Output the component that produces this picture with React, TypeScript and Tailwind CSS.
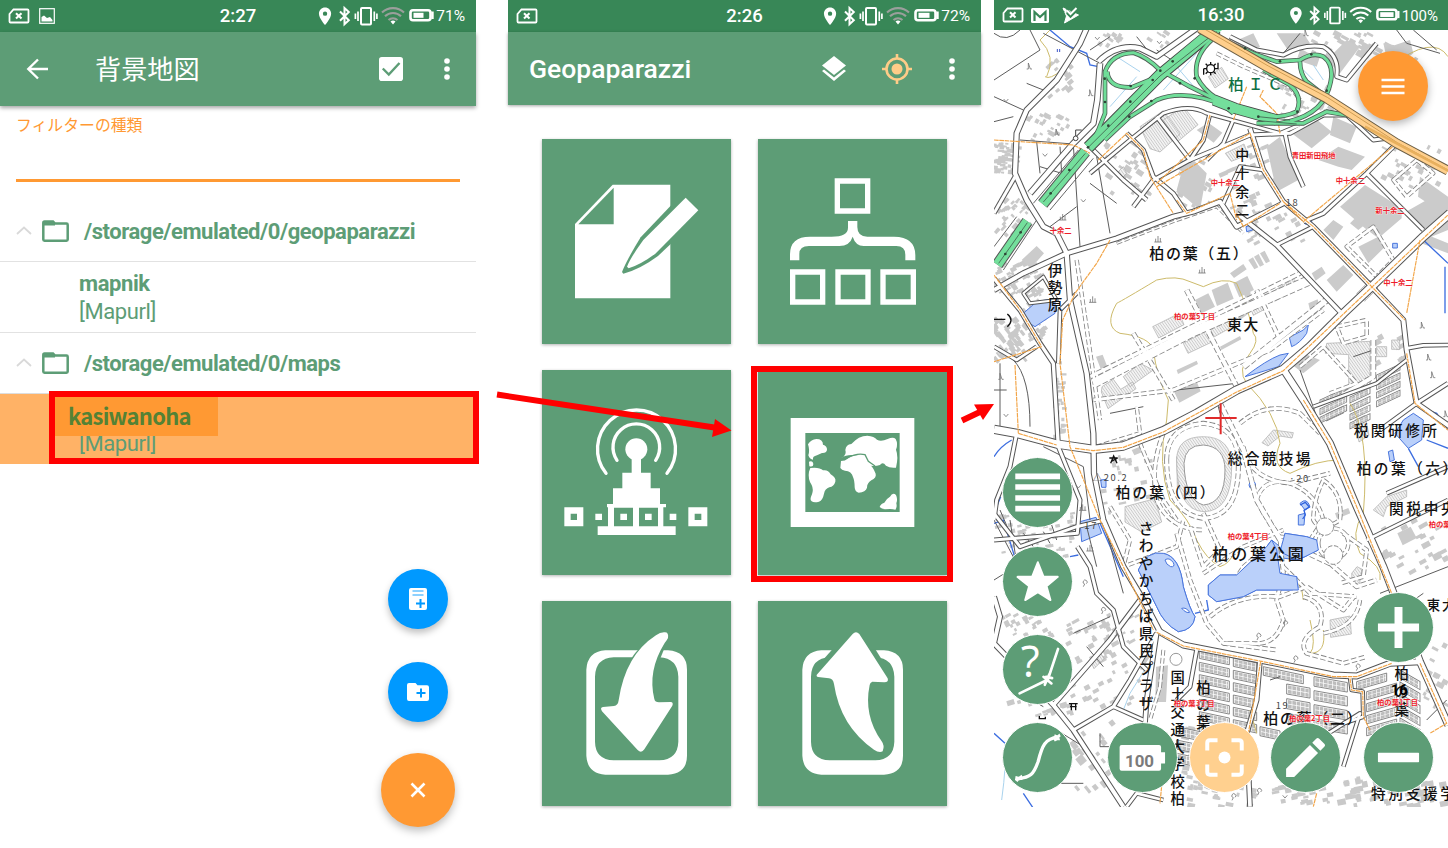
import React from "react";

/* ---------- status bar ---------- */

function StatusIcons({ wifi, level, small }: { wifi: string; level: number; small?: boolean }) {
  return (
    <svg viewBox="0 0 119 32" className={small ? "h-[30.5px] w-[114px]" : "h-8 w-[119px]"} fill="none">
      <path
        transform="translate(-1.4 5.8) scale(.87)"
        fill="#fff"
        d="M12 2C8.13 2 5 5.13 5 9c0 5.25 7 13 7 13s7-7.75 7-13c0-3.87-3.13-7-7-7zm0 9.500a2.500 2.500 0 1 1 0-5 2.500 2.500 0 0 1 0 5z"
      />
      <path d="M24 11.500l8.800 8.800-4.300 4V8l4.300 4-8.800 8.800" stroke="#fff" strokeWidth="2" />
      <rect x="45" y="8" width="10" height="16.500" rx="1" stroke="#fff" strokeWidth="2" />
      <path d="M42 11.500v9.500M58.300 11.500v9.500M39.400 13.500v5.500M60.900 13.500v5.500" stroke="#fff" strokeWidth="1.700" />
      <g stroke={wifi} strokeWidth="2.100">
        <path d="M66 12.500a16 16 0 0 1 22 0" />
        <path d="M69 16.300a11.500 11.500 0 0 1 16 0" />
        <path d="M72.500 20a7 7 0 0 1 9 0" />
      </g>
      <path d="M74.500 21.500a4 4 0 0 1 5 0L77 24.500z" fill="#fff" />
      <rect x="94.500" y="10.300" width="20" height="10" rx="2.500" stroke="#fff" strokeWidth="2.600" />
      <rect x="97.500" y="12.800" width={level} height="5" fill="#fff" />
      <path d="M116.500 11.500v7.500" stroke="#fff" strokeWidth="2.400" />
    </svg>
  );
}

function SimIcon() {
  return (
    <svg viewBox="0 0 22 16" className="h-4 w-[22px]" fill="none" stroke="#fff">
      <path d="M5.500 1.500h14q1 0 1 1v11q0 1-1 1h-17q-1 0-1-1V6z" strokeWidth="1.800" />
      <path d="M8 5.300l5.500 5.200M13.500 5.300L8 10.500" strokeWidth="2.100" />
    </svg>
  );
}

function StatusBar(p: {
  time: string;
  charge: string;
  wifi?: string;
  level: number;
  height: string;
  small?: boolean;
  children?: React.ReactNode;
}) {
  return (
    <div className={"grid shrink-0 grid-cols-[1fr_auto_1fr] items-center bg-[#388757] text-white " + p.height}>
      <div className="flex items-center gap-[9px] pl-2">
        <SimIcon />
        {p.children}
      </div>
      <div className="pt-[2px] text-[18.500px] font-medium">{p.time}</div>
      <div className={"flex items-center justify-end " + (p.small ? "pr-[10px] text-[15px]" : "pr-[11px] text-[15.500px]")}>
        <StatusIcons wifi={p.wifi ?? "#9b9f9c"} level={p.level} small={p.small} />
        <span className="ml-px pt-px whitespace-nowrap">{p.charge}</span>
      </div>
    </div>
  );
}

function Dots() {
  return (
    <svg viewBox="0 0 6 24" className="h-6 w-1.5" fill="#fff">
      <circle cx="3" cy="4" r="2.800" />
      <circle cx="3" cy="12" r="2.800" />
      <circle cx="3" cy="20" r="2.800" />
    </svg>
  );
}

/* ---------- left: source list ---------- */

function FolderRow({ path }: { path: string }) {
  return (
    <div className="flex h-[60px] items-center pl-4">
      <svg viewBox="0 0 16 9" className="-mt-0.5 h-[9px] w-4" fill="none" stroke="#d9d9d9" strokeWidth="1.800">
        <path d="M1 8l7-6.500L15 8" />
      </svg>
      <svg viewBox="0 0 27 22" className="ml-[10px] h-[22px] w-[27px]" fill="none">
        <path d="M1.300 3v16.500q0 1.200 1.200 1.200h22q1.200 0 1.200-1.200V4.800q0-1.200-1.200-1.200H13L11 1.500H2.500q-1.200 0-1.200 1.500z" stroke="#5d9d76" strokeWidth="2.500" />
        <path d="M1.500 1.500H11l2 2.500v1.500H1.500z" fill="#5d9d76" />
      </svg>
      <span className="ml-[15px] text-[22px] font-bold tracking-[-0.450px] whitespace-nowrap">{path}</span>
    </div>
  );
}

function SourcesPanel() {
  return (
    <section className="flex h-[848px] w-[476px] flex-col">
      <StatusBar time="2:27" charge="71%" level={10} height="h-8">
        <svg viewBox="0 0 16 16" className="size-4" fill="none">
          <rect x=".7" y=".7" width="14.600" height="14.600" stroke="#fff" strokeWidth="1.200" />
          <path d="M2.500 13.500V9l2.500-1.500 3 2.500 3-1 2.500 3v1.500z" fill="#fff" />
        </svg>
      </StatusBar>
      <header className="flex h-[74px] shrink-0 items-center bg-[#5d9d76] pr-[26px] pl-[26px] text-white shadow-[0_2px_4px_rgba(0,0,0,0.35)]">
        <svg viewBox="0 0 22 22" className="size-[22px]" fill="none" stroke="#fff" strokeWidth="2.400">
          <path d="M12 1.500L2.300 11l9.700 9.500M2 11h20" />
        </svg>
        <h1 className="ml-[47px] flex-1 pt-[3px] text-[26.200px]">背景地図</h1>
        <svg viewBox="0 0 24 24" className="mr-[41px] size-6">
          <rect width="24" height="24" rx="2.800" fill="#fff" />
          <path d="M3.800 11.500l6 6L20.500 6" fill="none" stroke="#5d9d76" strokeWidth="2.400" />
        </svg>
        <Dots />
      </header>
      <div className="mx-4 flex h-[76px] flex-col border-b-[3px] border-[#ff9933] pt-2">
        <label className="text-[15.850px] text-[#ff9933]">フィルターの種類</label>
      </div>
      <div className="flex flex-col pt-[19px] text-[#5d9d76]">
        <FolderRow path="/storage/emulated/0/geopaparazzi" />
        <div className="flex h-[72px] flex-col border-y-[1.500px] border-[#e2e2e2] pt-2 pl-[79px] text-[22px] leading-7 tracking-[-0.400px]">
          <b>mapnik</b>
          <span>[Mapurl]</span>
        </div>
        <FolderRow path="/storage/emulated/0/maps" />
        <div className="relative h-[71px] border-t border-[#dddddd] bg-[#ffb266] pt-[36px] pl-[79px] text-[22px] leading-7 tracking-[-0.400px]">
          <span>[Mapurl]</span>
          <div className="absolute top-[3px] left-[55px] flex h-[39px] w-[163px] items-center bg-[#ff9933] pb-[3px] pl-[13px] font-['Noto_Sans_CJK_JP',sans-serif] text-[22px] font-bold tracking-[-0.750px] text-[#548235]">
            kasiwanoha
          </div>
        </div>
      </div>
      <div className="flex flex-1 flex-col items-center self-end pt-[105px] pr-[21px]">
        <button className="flex size-[60px] items-center justify-center rounded-full bg-[#0099ff] shadow-[0_4px_7px_rgba(0,0,0,0.25)]">
          <svg viewBox="0 0 18 22" className="h-[22px] w-[18px]">
            <rect width="18" height="22" rx="2" fill="#fff" />
            <path d="M3.500 3h11M3.500 7h11" stroke="#0099ff" strokeWidth=".9" />
            <path d="M11.500 11v9M7 15.500h9" stroke="#0099ff" strokeWidth="2" />
          </svg>
        </button>
        <button className="mt-[33px] flex size-[60px] items-center justify-center rounded-full bg-[#0099ff] shadow-[0_4px_7px_rgba(0,0,0,0.25)]">
          <svg viewBox="0 0 22 18" className="h-[18px] w-[22px]">
            <path d="M2 0h6.500l2 2.300H20q2 0 2 2V16q0 2-2 2H2q-2 0-2-2V2Q0 0 2 0z" fill="#fff" />
            <path d="M14 5.500v9M9.500 10h9" stroke="#0099ff" strokeWidth="2" />
          </svg>
        </button>
        <button className="mt-[31px] flex size-[74px] items-center justify-center rounded-full bg-[#ff9933] shadow-[0_4px_8px_rgba(0,0,0,0.25)]">
          <svg viewBox="0 0 16 16" className="size-4" stroke="#fff" strokeWidth="2.600">
            <path d="M1.500 1.500l13 13M14.500 1.500l-13 13" />
          </svg>
        </button>
      </div>
    </section>
  );
}

/* ---------- middle: dashboard ---------- */

function Tile({ viewBox, children }: { viewBox: string; children: React.ReactNode }) {
  return (
    <button className="h-[205px] bg-[#5d9d76] shadow-[0_1px_3px_rgba(0,0,0,0.3)]">
      <svg viewBox={viewBox} className="h-full w-full" fill="#fff">
        {children}
      </svg>
    </button>
  );
}

const G = "#5d9d76";

function DashboardPanel() {
  return (
    <section className="ml-8 flex h-[848px] w-[473px] flex-col">
      <StatusBar time="2:26" charge="72%" level={11} height="h-8" />
      <header className="flex h-[73px] shrink-0 items-center bg-[#5d9d76] pr-[26px] pl-[21px] text-white shadow-[0_1px_3px_rgba(0,0,0,0.35)]">
        <h1 className="flex-1 pt-px text-[26.500px] font-medium">Geopaparazzi</h1>
        <svg viewBox="0 0 24 26" className="mr-9 h-[26px] w-6" fill="#fff">
          <path d="M12 0l12 9.500L12 19 0 9.500z" />
          <path d="M0 15l2-1.500 10 8 10-8 2 1.500-12 10z" />
        </svg>
        <svg viewBox="0 0 30 30" className="mr-[37px] size-[30px]" fill="none" stroke="#ffcc88" strokeWidth="2.600">
          <circle cx="15" cy="15" r="10.500" />
          <circle cx="15" cy="15" r="5.500" fill="#ffcc88" stroke="none" />
          <path d="M15 0v5M15 25v5M0 15h5M25 15h5" />
        </svg>
        <Dots />
      </header>
      <div className="grid grid-cols-[189.330px_189.330px] gap-x-[26.300px] gap-y-[26px] pt-[34px] pl-[34px]">
        <Tile viewBox="36 27 568 615">
          <path d="M248 164H421V505H135V282z" />
          <path d="M251 173V283H145z" fill={G} />
          <path d="M467 180L530 240 384 378Q330 418 280 431L276 426Q290 390 332 322z" fill={G} />
          <path d="M467 203L505 241 376 371Q335 402 296 415L291 410Q302 382 340 330z" />
        </Tile>
        <Tile viewBox="683 27 568 615">
          <g fill="none" stroke="#fff" strokeWidth="16">
            <path d="M921 153h91v90h-91zM787 426h90v90h-90zM923 426h90v90h-90zM1058 426h91v90h-91z" />
          </g>
          <path d="M953 273h28v18q0 29 30 29h80q64 0 64 56v15h-30v-17q0-26-27-26H1000q-24 0-33-28-9 28-40 28H836q-29 0-29 24v19h-28v-18q0-53 60-53h65q49 0 49-27z" />
        </Tile>
        <Tile viewBox="36 30 568 615">
          <g fill="none" stroke="#fff" strokeWidth="10" strokeLinecap="round">
            <path d="M228 340A117 117 0 1 1 411 340" />
            <path d="M261 301A70 70 0 1 1 377 301" />
          </g>
          <circle cx="319" cy="268" r="33" />
          <path d="M305 295h28v43h29v47h28v47h18v10h-8v57h37v26H203v-26h31v-57h-3v-10h18v-47h28v-47h28z" />
          <path d="M252 443h57v56h-57zM327 443h57v56h-57z" fill={G} />
          <path d="M196 461h20v19h-20zM271 461h20v19h-20zM345 461h20v19h-20zM419 461h20v19h-20z" />
          <path fillRule="evenodd" d="M103 442h57v57h-57zM122 461v19h19v-19zM475 442h57v57h-57zM494 461v19h20v-19z" />
        </Tile>
        <Tile viewBox="683 30 568 615">
          <path fillRule="evenodd" d="M781 174h371v327H781zM825 219v237h283V219z" />
          <path d="M833 253q10-15 25-16 20 0 20 17 13 4 12 16-2 10-15 9l-15 7q-14 3-12 13-9 0-14-13 5-15-1-33zM836 305q12-4 13 8 0 9-12 6zM840 324q28-3 38 7 15-3 23 12 17 10 14 22-4 14-18 17-13 4-16 19-4 20-15 24-15 4-22-1-7-4 1-21 5-15-1-28-12-18-8-40z" />
          <path d="M935 293q15-9 10-23 2-16 18-18 22-25 48-25 21 1 29 12 12 7 32-2 17-8 24 0 8 15 1 32 8 20 0 54-19 2-30-6-10-13-18-2-16 6-39 1-14-8-20-21-5-12-22-10-22-1-34 8z" />
          <path d="M932 303q13 0 20-7 14-14 52-9 9 7 12 25 12 8 20 29 3 12-13 20-13 8-13 22-4 13-25 15-11-1-12-16 0-20-5-31-4-18-24-19-10-2-14-8zM1048 441q2-9 14-13 7-13 17-18 8-14 18-5 6 14 1 25 3 12-3 19-11-3-30-1-12-1-17-7z" />
          <path d="M950 294q30-16 54-10l10 20 20 14" fill="none" stroke={G} strokeWidth="4" />
        </Tile>
        <Tile viewBox="36 18 568 615">
          <path fillRule="evenodd" d="M226 166H414Q471 170 471 224V482Q471 536 414 539H226Q172 536 169 482V224Q172 170 226 166zM251 187Q196 190 195 245V440Q196 494 251 496H388Q443 494 445 440V245Q443 190 388 187z" />
          <path d="M324 164Q308 182 303 193L390 193 402 163z" fill={G} />
          <path d="M402 112Q417 110 414 129 412 134 404 144 352 228 373 312 375 322 387 322L422 321Q431 322 427 332L343 463Q334 476 323 465L216 349Q209 337 219 336L252 333Q264 332 266 316 286 180 378 121 390 112 402 112z" />
        </Tile>
        <Tile viewBox="683 18 568 615">
          <path fillRule="evenodd" d="M873 166H1061Q1118 170 1118 224V482Q1118 536 1061 539H873Q819 536 816 482V224Q819 170 873 166zM898 187Q843 190 842 245V440Q843 494 898 496H1035Q1090 494 1092 440V245Q1090 190 1035 187z" />
          <path d="M905 164L881 191 900 205 1040 205 1053 191 1036 164z" fill={G} />
          <path d="M862 236L967 117Q977 106 987 117L1072 250Q1076 262 1062 262L1026 260Q1019 262 1018 270 999 362 1054 439 1064 452 1057 469 1046 474 1031 464 930 394 911 267 908 251 896 250L863 246Q855 243 862 236z" />
        </Tile>
      </div>
    </section>
  );
}

/* ---------- right: map ---------- */

function rng(seed: number) {
  let s = seed;
  return () => {
    s = (s * 16807) % 2147483647;
    return s / 2147483647;
  };
}

/* small rotated houses inside a box: seed, x, y, w, h, count, angle, size */
const houseFields: number[][] = [
  [11, 14, 430, 76, 90, 60, 0.1, 13],
  [12, 105, 330, 130, 90, 24, 0.5, 14],
  [13, 150, 180, 100, 110, 22, -0.7, 15],
  [14, 330, 95, 230, 50, 18, 0.6, 14],
  [15, 20, 600, 100, 110, 40, -0.8, 13],
  [16, 14, 790, 146, 100, 60, -0.5, 14],
  [17, 14, 960, 96, 120, 70, 0.9, 15],
  [18, 100, 860, 80, 160, 36, 0.9, 14],
  [19, 195, 1080, 30, 260, 36, 0, 13],
  [20, 20, 1540, 230, 130, 60, -0.2, 13],
  [21, 20, 1830, 180, 120, 34, -0.5, 14],
  [22, 230, 1840, 220, 280, 60, -0.5, 16],
  [23, 60, 2100, 200, 50, 16, -0.3, 16],
  [24, 250, 2150, 120, 220, 20, 0.9, 18],
  [25, 900, 100, 300, 70, 36, 0.5, 17],
  [26, 350, 430, 130, 150, 30, 0.6, 17],
  [27, 560, 480, 110, 140, 24, 0.5, 15],
  [28, 700, 410, 170, 230, 28, -0.4, 18],
  [29, 780, 630, 160, 110, 24, -0.5, 15],
  [30, 1100, 1000, 140, 90, 10, -0.5, 18],
  [31, 340, 1370, 150, 170, 24, -0.2, 15],
  [32, 1180, 1560, 190, 160, 24, -0.5, 20],
  [33, 1300, 1930, 74, 200, 18, 0.5, 16],
  [34, 580, 2180, 220, 240, 80, 0.2, 16],
  [35, 1050, 2330, 320, 90, 50, -0.2, 20],
  [36, 830, 2340, 200, 70, 20, -0.2, 16],
  [37, 870, 250, 160, 100, 30, 0.5, 14],
  [38, 1180, 440, 190, 120, 26, 0.5, 15],
  [39, 1190, 150, 90, 80, 20, 0.5, 18],
];

function houses(f: number[]) {
  const [seed, x, y, w, h, n, a, size] = f;
  const r = rng(seed * 7919);
  let d = "";
  for (let i = 0; i < n; i++) {
    const cx = x + r() * w;
    const cy = y + r() * h;
    const hw = (size * (0.5 + r())) / 2;
    const hh = (size * (0.4 + r() * 0.6)) / 2;
    const c = Math.cos(a);
    const s = Math.sin(a);
    const pts = [[-hw, -hh], [hw, -hh], [hw, hh], [-hw, hh]].map(
      ([px, py]) => `${(cx + px * c - py * s).toFixed(1)} ${(cy + px * s + py * c).toFixed(1)}`,
    );
    d += "M" + pts.join("L") + "z";
  }
  return d;
}

const housePath = houseFields.map(houses).join("");

const buildings =
  "M560 570l30-110 60 60-20 110zM620 390l35-22 42 30-26 30zM830 440l40-30 55 130-65 35zM905 400l70-45 50 40-60 50zM985 480l60-40 80 30-40 40-40-10zM1030 350l70 30-20 50-60-25zM720 130l70-30 20 40-60 30zM860 100l80 0 20 30-60 30zM1010 180l60-60 40 20-60 80zM1050 620l75-65 110 70 0 30-70 60-40-30zM1240 640l70-40 64 50v40l-50 20zM1290 530l84 60v60l-90-60zM1300 700l74 30v30l-80-30zM95 780l45-42 22 22-40 45zM735 940l45-20-20-40 20-10 10 60-40 30zM720 820l40-28 10 16-38 26zM615 900l40-20 20 40-40 20zM665 870l48-22 18 48-50 22zM730 850l42-22 20 42-44 22zM775 780l14-8 16 30-12 6zM792 770l14-8 16 32-12 6zM810 760l14-8 16 32-12 6zM550 1170l68-30 14 34-64 34zM560 1110l60-28 4 10-60 30zM690 1040l60-32 4 10-60 32zM1010 840l50-45 30 30-50 50zM965 820l30-20 12 20-30 22zM1000 690l30-30 30 20-30 40zM1080 670l30-30 20 30-25 20zM1105 740l60-30 20 30-50 50zM955 910l28-12 6 26-28 12zM318 1070l20-6 14 36-20 6zM425 1350l30-12 8 16-30 12zM1222 1600l40-20 18 34-42 22zM1035 1540l40-16 6 16-40 16zM498 2000l36-4-6 110-32 0zM440 2000l26-40 14 10-26 40zM1180 130l60 10 20 40-60 40zM930 150l60 20-10 30-60-20zM1200 140l60-20 10 40-50 40zM900 1090l40-30 50 20-50 40z";

const hatched =
  "M450 380l70-48 50 70-60 54-30-10zM520 360l60-40 44 54-60 50zM655 230l40-28 20 34-40 28zM706 460l56-28 12 32-50 20zM488 980l80-40 14 34-76 40zM580 1030l74-40 16 34-76 36zM660 980l70-36 12 28-72 40zM776 910l34-12 14 30-34 18zM840 880l70-44 20 24-76 44zM336 1160l34-22 22 30 36-22 10 20-84 60-20-50zM400 1130l50-40 40 20-70 50zM1010 1030l130-6 0 120-64 20 0-100-70-4zM1160 1040l30 0v30h-30zM1205 1020l24 0v28h-24zM560 1370l28-20 4 140-30-30zM405 1520l90-24 20 70-60 30-50-30zM1020 1860l60-12 4 54-62 10zM850 1290l60 8-4 16-36-6-36 30-18-10zM1150 1530l40-40 60-20 0 20-60 30-10 30zM1095 1260l30-14 12 60-30 20zM300 1980l30-24 12 20-30 30zM1100 880l40-40 24 24-40 40zM380 520l20-20 10 20-20 20zM1085 1720l16-20 16 8-10 50-20-8z";

/* [path, width] */
const roads: [string, number][] = [
  ["M290 85L270 130 200 240 110 330 80 400 75 520 110 600 160 680 200 700 230 760 240 900 290 1120 310 1300 312 1420 340 1560 400 1700 460 1800 510 1895", 13],
  ["M75 530L12 640", 9],
  ["M12 1288L80 1300 200 1332 310 1348 400 1338 520 1292 620 1240 740 1170 880 1108 960 1040 1060 940 1145 860 1300 710 1380 640", 22],
  ["M1145 860L970 680 880 605 820 510 780 385", 11],
  ["M740 640L860 735 1050 935", 11],
  ["M860 735L970 680", 8],
  ["M880 1108L940 1200 1020 1330 1100 1520 1180 1700 1290 1985 1375 2175", 18],
  ["M1145 860L1240 960 1250 1050 1280 1210 1380 1280", 12],
  ["M1250 1045L1300 1036 1375 1035", 8],
  ["M12 870L100 820 230 760 380 715 550 650 610 635 690 605 740 680 880 610", 12],
  ["M12 835L90 930 150 1030 190 1090 205 1340", 10],
  ["M205 1090L210 930 260 880", 8],
  ["M80 1300L60 1400 20 1500 12 1560", 9],
  ["M205 1340L270 1500 262 1600 12 1620", 9],
  ["M12 1540L90 1640 260 1580 345 1560", 9],
  ["M262 1640L300 1700 320 1780 370 1830 400 1940 470 2010", 9],
  ["M12 1790L30 1850 12 1930 190 2115 250 2190 400 2420", 12],
  ["M190 2115L360 1920 450 1800", 11],
  ["M250 2190L370 2120 420 2040 500 1900", 9],
  ["M370 2120L460 2160", 8],
  ["M500 1890L580 1935 810 1980 1030 2025 1100 2028 1200 1990 1290 1985", 15],
  ["M500 1900L470 2100 460 2240", 11],
  ["M810 1980L800 2100 770 2200 780 2420", 11],
  ["M1080 2030L1085 2070 1118 2075 1120 2150 1060 2170", 8],
  ["M620 1950L600 2060 560 2100", 9],
  ["M300 440L400 540 470 600", 9],
  ["M410 400L460 450 490 530 550 580 590 640", 9],
  ["M490 540L600 480 780 405 900 400 1000 345 1070 345 1150 420 1190 415", 9],
  ["M660 340L640 420 600 480 500 350", 9],
  ["M730 360L700 430 650 480", 8],
  ["M885 400L900 470 940 560", 9],
  ["M1220 430L1130 520 1000 640 940 665", 9],
  ["M1130 520L1300 690", 9],
  ["M1190 1480L1374 1400", 8],
  ["M1130 1620L1374 1500", 8],
  ["M700 610L750 500 820 510", 8],
  ["M430 620L490 540", 9],
  ["M1374 1150L1280 1210 1170 1290", 9],
  ["M970 1220L1160 1150 1250 1080", 7],
  ["M920 2260L1110 2140 1060 2300", 8],
  ["M410 2420L440 2380 520 2400", 8],
  ["M12 1040L80 1080 140 1040", 8],
  ["M100 880L160 830 200 900 120 910z", 6],
  ["M330 190L322 300 310 370 250 430 120 580", 14],
  ["M325 185Q380 130 450 145L500 170 620 85", 13],
  ["M300 520L420 420 520 340Q600 310 650 340L760 370 870 400 1000 345", 8],
  ["M720 110L800 150 880 165Q940 130 1000 140Q1050 170 1040 230L1070 240 1160 130", 9],
];

/* paths drawn with dashed edges */
const dashedRoads: [string, number][] = [
  ["M300 1130L930 820", 10],
  ["M310 1150L600 1000 960 840", 26],
  ["M310 1200L550 1170 840 1050 1000 930", 9],
  ["M430 1000L550 1200", 10],
  ["M590 870L740 1160", 12],
  ["M800 870L870 1020", 10],
  ["M760 1100L860 1020 1010 900", 16],
  ["M260 780L330 1260", 8],
  ["M320 1340L450 1300 440 1220", 8],
  ["M530 1380Q530 1280 640 1270Q750 1280 745 1400Q745 1550 640 1555Q530 1540 530 1380z", 10],
  ["M520 1300Q480 1400 500 1500Q540 1590 640 1590", 9],
  ["M690 1210L760 1350 800 1500 870 1620 1020 1690", 12],
  ["M750 1270Q830 1200 930 1240L990 1300", 9],
  ["M760 1340Q780 1440 900 1450L1020 1420", 9],
  ["M800 1500Q820 1430 900 1450Q980 1480 1000 1560L960 1620 870 1610 820 1540z", 8],
  ["M1000 1440Q1060 1480 1050 1560Q990 1600 970 1560Q970 1500 1000 1440z", 8],
  ["M1030 1630m-45 0a45 45 0 1 0 90 0a45 45 0 1 0-90 0", 8],
  ["M640 1540L690 1650 640 1700 600 1580", 9],
  ["M560 1600L600 1740 650 1870 700 1930 860 1950", 9],
  ["M640 1720L760 1640 880 1590", 8],
  ["M660 1850Q740 1780 870 1790L950 1760 1060 1830 1100 1780", 9],
  ["M870 1620L880 1720 860 1800 880 1860Q860 1940 780 1930L700 1930", 9],
  ["M940 1790Q1010 1810 990 1880Q920 1920 950 1960L1060 1990 1130 1970", 9],
  ["M1020 1690L1100 1760 1160 1740", 10],
  ["M1060 1600L1130 1650 1120 1730 1050 1750", 9],
  ["M880 1700L960 1780 1100 1790", 8],
  ["M360 1520L420 1620 400 1700 560 1640 580 1560", 8],
  ["M450 1330L520 1500 560 1560", 8],
  ["M1040 980L1130 960 1130 1010 1060 1030z", 8],
  ["M930 1100L1000 1040 1100 1150 1020 1180", 8],
  ["M1150 1020V1130L1050 1190", 12],
  ["M1070 740L1160 830 1210 780 1150 680z", 8],
  ["M1210 540L1280 480 1330 520 1250 590z", 8],
  ["M720 1760L760 1700 830 1640", 7],
  ["M1000 1900Q1100 1880 1110 1800", 8],
  ["M680 160L760 200 900 260 930 300", 7],
  ["M520 1950L510 2060 480 2160", 7],
  ["M380 730L550 665 680 620 760 700", 4],
];

const hairlines =
  "M12 240L150 150 120 90M12 100Q50 130 90 90M100 330L12 290M12 365L70 350M90 420L250 432M140 425L150 520M210 440L215 520 150 500M160 100L330 190M110 250L160 270 190 250M250 435L270 740M320 470L360 700M180 680L260 620M300 550L380 610M30 1090V1300M70 1080Q120 1130 120 1280M12 1170H50M160 1340L280 1400 300 1560M345 1580L400 1780M290 1580L320 1700M560 1170L740 1150M930 1110L980 1250M680 1200L690 1240M1090 1070L1150 1050M1340 150L1270 90M1220 90L1250 130 1350 160M880 160L930 100M440 110L480 160M1310 2160L1370 2100M12 1560L80 1690 60 1560M100 1600L130 1640M160 1595L180 1630M30 1530L60 1600M200 1620L180 1560M1170 1780L1374 1700M1200 1850L1300 1780M1140 1890L1200 1900M90 2080L160 2120M290 1940L340 2000M250 1900L360 1850M330 2200V2240H380M210 2350H280M280 2240L200 2190M840 2040L870 2030M500 150L560 190M300 150L360 110M12 1740L60 1710M360 1240L460 1220";

const orangeDashes =
  "M12 420L250 435 300 460M325 480L410 400 460 450 480 530 550 640M12 825L90 930 155 1040M155 1040L12 1085M75 1095L85 1300M85 1300L200 1335M360 720L320 790 255 880 218 960 210 1090 240 1340 330 1560 400 1700 490 1890M255 1345L310 1352 400 1342 520 1296 740 1176 880 1112 1145 862 1374 645M940 1200L1020 1330 1100 1520 1205 1780M660 345L640 420 500 550M500 560L780 400 820 510 880 605 970 680 1145 860 1245 960M1250 1060L1275 1210 1374 1290M740 640L760 680 870 610M500 1897L580 1938 810 1983 1030 2030 1100 2030 1205 1990M812 1985L775 2200M1080 2035L1085 2070 1118 2075 1120 2150 1140 2190M530 2200L510 2410M1220 430L940 665 880 605M770 260L730 360M870 400L860 340 810 290 820 270M1290 1990L1370 2170 1320 2200M1290 720L1250 940M980 2380L970 2420M560 600L590 640 720 580 740 660";

const contours =
  "M170 230Q200 170 150 120L180 90M165 230Q180 240 215 210M500 840Q560 825 600 845L640 860Q700 830 740 850Q780 940 790 1000Q810 1020 780 1060Q740 1110 770 1150Q860 1240 870 1330Q840 1400 900 1420Q980 1380 1050 1380M500 840Q400 900 380 910Q340 980 390 1000Q480 1010 490 1050Q500 1130 535 1200L530 1260Q500 1390 540 1500Q600 1560 620 1620Q650 1680 690 1700Q720 1690 730 1660M1080 1210Q1140 1300 1120 1540Q1080 1600 1110 1660Q1180 1700 1170 1740M960 1860Q980 1940 960 1960Q1010 1960 1000 1890M870 1700Q940 1740 940 1800M1200 200Q1330 100 1374 170M780 2130L800 2200";

const ponds =
  "M100 940L140 905 195 895 195 940 135 980 110 965zM765 1130Q830 1080 870 1065L895 1060 865 1100 800 1120zM898 1012L940 990 955 975 950 1000Q930 1030 905 1040zM270 1565L318 1552 335 1600 275 1625zM445 1710Q470 1650 520 1660Q570 1670 580 1760Q600 1830 615 1850Q610 1890 565 1895Q520 1870 500 1820L470 1760zM655 1755L690 1725 740 1725 830 1640 845 1620 870 1640 885 1600 950 1610 980 1620 985 1650 945 1670 920 1680 850 1670 870 1720 920 1730 925 1770 870 1770 800 1770 760 1790 680 1805 655 1785zM1215 1300L1240 1260 1270 1240 1300 1260 1295 1320 1255 1345zM1195 1355L1208 1350 1213 1380 1200 1385zM945 660L965 650 965 675 945 672zM768 680L785 675 788 690 770 695zM777 1455a10 10 0 1 0 20 0a10 10 0 1 0-20 0M925 1545L945 1540 942 1575 925 1575zM332 1440L348 1438 348 1462 335 1462zM930 1510Q950 1490 960 1520L945 1530zM1208 730h14v14h-14z";

const streams =
  "M180 90L240 140 290 160 300 195 325 200M12 1370Q30 1340 65 1320M12 1540L32 1490M12 1570L40 1560 80 1690M330 1570L400 1730M1280 1200L1310 1230 1340 1240 1374 1290M1255 1345L1285 1400M1310 1320L1374 1345M1300 720L1374 790M1365 800V940M615 1840L655 1830 650 1800M12 2200L45 2230M100 2380L130 2425M240 1670L265 1665";

const loops =
  "M300 440L325 390 345 340 345 215Q365 160 430 158Q470 170 510 210L600 260 680 300 730 340M352 215Q355 265 425 262L490 235 520 210M345 420L420 350 500 300Q560 275 640 295L690 310M665 120Q610 170 620 230Q640 270 680 295M720 130L790 160 860 185 930 180Q970 155 1000 170Q1040 200 1015 270Q990 350 870 370L800 370M930 185Q930 220 950 245L995 280M820 210L900 255Q940 290 920 335Q880 355 810 350M860 370L940 370 1010 335 1085 348";

/* terraced housing blocks: x, y, width, rows, pitch, skew */
const terraces: number[][] = [
  [628, 1950, 90, 7, 37, 12],
  [730, 1974, 70, 6, 37, 12],
  [820, 2000, 120, 1, 38, 12],
  [890, 2052, 70, 3, 44, 10],
  [972, 2030, 100, 4, 42, 10],
  [1010, 1242, 50, 1, 30, -25],
  [1100, 2045, 90, 1, 36, -16],
  [1130, 2075, 90, 4, 36, -16],
  [1230, 2010, 60, 5, 36, 30],
  [560, 2180, 80, 3, 40, 12],
  [660, 2200, 90, 2, 40, 12],
  [990, 1200, 80, 3, 26, -25],
  [1080, 1165, 60, 5, 26, -25],
  [1160, 1125, 70, 4, 26, -25],
  [810, 2180, 60, 1, 40, 12],
];

type Label = [string, number, number, number, number];

const labels: Label[] = [
  ["柏の葉（五）", 478, 760, 50, 45],
  ["東大", 711, 973, 49, 45],
  ["総合競技場", 713, 1377, 51, 44],
  ["柏の葉（四）", 377, 1477, 50.5, 44],
  ["柏の葉公園", 667, 1663, 56.5, 48],
  ["税関研修所", 1091, 1291, 51.5, 44],
  ["柏の葉（六）", 1100, 1407, 51.5, 44],
  ["関税中央", 1197, 1526, 52, 44],
  ["東大", 1310, 1815, 46, 40],
  ["特別支援学", 1143, 2382, 52, 44],
  ["柏の葉（二）", 820, 2155, 50, 45],
];

const vertical: Label[] = [
  ["中十余二", 757, 465, 54.500, 42],
  ["伊勢原", 195, 813, 51, 44],
  ["さわやかちば県民プラザ", 468, 1585, 52.500, 44],
  ["国土交通大学校柏", 563, 2032, 52, 43],
  ["柏の葉", 640, 2062, 52.500, 43],
  ["柏の葉", 1235, 2022, 54, 43],
];

const redLabels: [string, number, number][] = [
  ["青田新田飛地", 905, 465],
  ["中十余二", 662, 547],
  ["中十余二", 1037, 542],
  ["新十余二", 1156, 631],
  ["十余二", 179, 692],
  ["中十余二", 1180, 846],
  ["柏の葉5丁目", 552, 950],
  ["柏の葉4丁目", 713, 1608],
  ["柏の葉3丁目", 551, 2110],
  ["柏の葉2丁目", 897, 2156],
  ["柏の葉1丁目", 1161, 2108],
  ["柏の葉1", 1316, 1574],
];

const spots: [string, number, number][] = [
  ["18", 887, 608],
  ["△20.2", 308, 1434],
  ["·20", 898, 1435],
  ["17", 283, 1577],
  ["19", 857, 2118],
];

const trees = [[118, 197], [302, 277], [201, 395], [948, 97], [1297, 974], [1316, 1070], [1328, 1123], [33, 1128], [382, 1898], [1368, 1240]];
const grass = [[218, 652], [504, 718], [636, 811], [308, 899], [278, 1523], [300, 1645]];
const fieldsMarks = [[322, 115], [508, 127], [48, 301], [165, 465], [280, 602], [168, 85], [48, 1246], [265, 1460], [885, 2390]];
const leafRings = [[286, 1750], [341, 1832], [887, 1872], [807, 1910], [918, 1978], [1105, 2002], [732, 2391], [809, 2375]];

function MapCanvas() {
  return (
    <svg viewBox="12 90 1362 2331" className="block h-[777px] w-[454px]" preserveAspectRatio="none">
      <defs>
        <pattern id="hatch" width="7" height="7" patternUnits="userSpaceOnUse" patternTransform="rotate(-35)">
          <rect width="7" height="7" fill="#f3f3f3" />
          <path d="M0 0V7" stroke="#b4b4b4" strokeWidth="3" />
        </pattern>
      </defs>
      <rect x="12" y="90" width="1362" height="2331" fill="#fff" />
      <path d={housePath} fill="#c9c9c9" />
      <path d={buildings} fill="#cbcbcb" />
      <path d={hatched} fill="url(#hatch)" stroke="#aaa" strokeWidth="2" />
      {terraces.map(([x, y, w, n, pitch, k], i) => (
        <g key={i} transform={`translate(${x} ${y}) skewY(${k})`}>
          {Array.from({ length: n }, (_, j) => (
            <g key={j}>
              <rect y={j * pitch} width={w} height={pitch * 0.68} fill="#fff" stroke="#777" strokeWidth="2.500" />
              <path
                d={`M4 ${j * pitch + pitch * 0.2}H${w - 4}M4 ${j * pitch + pitch * 0.5}H${w - 4}`}
                stroke="#bdbdbd"
                strokeWidth={pitch * 0.25}
                strokeDasharray="11 2"
              />
            </g>
          ))}
        </g>
      ))}
      <path d={contours} fill="none" stroke="#cdbb6b" strokeWidth="3" />
      <path d={ponds} fill="#bad0fa" stroke="#4a76dd" strokeWidth="3" />
      <path d={streams} fill="none" stroke="#3d6ee0" strokeWidth="4" />
      <path d="M470 2000L420 2080 400 2130M45 2230Q50 2290 35 2400M360 320L440 230M520 270L620 160M940 210L970 240M970 195L1000 240M560 200L620 270M380 170L450 215" fill="none" stroke="#a9d3ee" strokeWidth="3" />
      <path d={hairlines} fill="none" stroke="#5c5c5c" strokeWidth="3" />

      <g fill="none" strokeLinejoin="round">
        {dashedRoads.map(([d, w], i) => (
          <path key={i} d={d} stroke="#858585" strokeWidth={w + 5} strokeDasharray="17 7" />
        ))}
        {dashedRoads.map(([d, w], i) => (
          <path key={i} d={d} stroke="#fff" strokeWidth={w} />
        ))}
        {roads.map(([d, w], i) => (
          <path key={i} d={d} stroke="#555" strokeWidth={w + 6} />
        ))}
        {roads.map(([d, w], i) => (
          <path key={i} d={d} stroke="#fff" strokeWidth={w} />
        ))}
      </g>
      <path d={orangeDashes} fill="none" stroke="#f2a548" strokeWidth="3.500" strokeDasharray="14 2" />

      {/* lakes inside the park stay above the footpaths */}
      <path
        d="M655 1755L690 1725 740 1725 830 1640 845 1620 860 1650 870 1720 920 1730 925 1770 870 1770 800 1770 760 1790 680 1805 655 1785zM445 1710Q470 1650 520 1660Q570 1670 580 1760Q600 1830 615 1850Q610 1890 565 1895Q520 1870 500 1820L470 1760zM885 1600L950 1610 980 1620 985 1650 945 1670 920 1680 870 1655z"
        fill="#bad0fa"
        stroke="#4a76dd"
        strokeWidth="3"
      />
      <path d="M560 1380Q560 1310 640 1310Q725 1310 725 1400Q725 1535 640 1535Q560 1530 560 1380z" fill="url(#hatch)" stroke="#aaa" strokeWidth="2" />
      <path d="M582 1390Q585 1335 640 1335Q705 1340 705 1410Q705 1510 640 1515Q585 1500 582 1390z" fill="#fff" stroke="#999" strokeWidth="3" />
      <circle cx="1005" cy="1580" r="26" fill="#fff" stroke="#999" strokeWidth="3" strokeDasharray="18 4" />
      <circle cx="1030" cy="1665" r="28" fill="#fff" stroke="#888" strokeWidth="3" strokeDasharray="14 5" />
      <circle cx="558" cy="1978" r="18" fill="#fff" stroke="#999" strokeWidth="3" />
      <path d="M525 1680q12-10 25 8 6 14-8 12-14-6-17-20zM575 1825q14-4 24 12-10 4-24-12z" fill="#fff" stroke="#4a76dd" strokeWidth="3" />
      <path d="M930 1515l16-8 12 14-16 10 4 14-8 12" fill="none" stroke="#2f62dc" strokeWidth="4" />

      {/* expressway and ramps */}
      <g fill="none" strokeLinejoin="round">
        <path d={loops} stroke="#4f5f55" strokeWidth="14" />
        <path d="M680 85L510 225 295 442" stroke="#444" strokeWidth="37" />
        <path d="M672 300L735 325 860 360" stroke="#444" strokeWidth="34" />
        <path d={loops} stroke="#6fdd98" strokeWidth="9" />
        <path d="M690 75L510 225 295 442" stroke="#74df9c" strokeWidth="31" />
        <path d="M672 300L735 325 860 360" stroke="#74df9c" strokeWidth="29" />
        <path d="M286 455L158 612M112 664L22 794" stroke="#555" strokeWidth="35" />
        <path d="M286 455L158 612M112 664L22 794" stroke="#74df9c" strokeWidth="29" />
        <path d="M680 95L510 228 295 442M286 460L160 606M112 668L26 790M805 350L900 360M805 362L920 372" stroke="#40614d" strokeWidth="2.500" />
        <path d="M265 450L130 610M310 475L180 630M140 660L40 810M80 650L12 740" stroke="#666" strokeWidth="3" />
        <path d="M630 85L830 200 1010 295 1220 430 1374 512" stroke="#6d5f45" strokeWidth="30" />
        <path d="M630 85L830 200 1010 295 1220 430 1374 512" stroke="#ffcf8c" strokeWidth="24" />
        <path d="M640 85L835 198 1012 292 1222 428 1374 510" stroke="#c79347" strokeWidth="2.500" />
        <path d="M1125 380L1374 512" stroke="#e8b05e" strokeWidth="8" />
      </g>
      <g fill="#2c4435">
        {[[548, 184], [511, 212], [488, 240], [421, 305], [355, 377], [294, 442], [238, 510], [182, 580], [344, 236], [345, 306], [716, 325], [805, 350], [870, 184], [964, 163], [1010, 272], [765, 145], [484, 303], [418, 350], [92, 697], [46, 762], [422, 258], [570, 250], [614, 235], [922, 335]].map(([x, y]) => (
          <circle key={`${x}-${y}`} cx={x} cy={y} r="4" />
        ))}
      </g>

      {/* map symbols */}
      <g fill="none" stroke="#777" strokeWidth="2.500">
        {trees.map(([x, y]) => (
          <path key={`${x}-${y}`} d={`M${x - 8} ${y + 10}h5V${y - 8}l6 18h5`} />
        ))}
        {grass.map(([x, y]) => (
          <path key={`${x}-${y}`} d={`M${x - 11} ${y + 8}h22M${x - 7} ${y + 8}v-10M${x} ${y + 8}v-18M${x + 7} ${y + 8}v-12`} />
        ))}
        {fieldsMarks.map(([x, y]) => (
          <path key={`${x}-${y}`} d={`M${x - 7} ${y - 4}l7 8 7-8`} />
        ))}
        {leafRings.map(([x, y]) => (
          <path key={`${x}-${y}`} d={`M${x - 6} ${y + 10}l4-8a6 6 0 1 1 5-1`} />
        ))}
      </g>
      <g fill="none" stroke="#111" strokeWidth="4">
        <circle cx="662" cy="206" r="12" />
        <path d="M662 194v-8M662 218v8M650 206h-9M674 206h10V188M641 206v18M653 197l-6-6M671 197l6-6M653 215l-6 6M671 215l6 6" />
        <path d="M362 1390l9-22 10 22M358 1374h25l-19 10M237 2111h26M240 2120h20M244 2111v20M257 2111v20M148 2148v8h18v-6M12 958H46M52 942q22 18 0 38" />
      </g>
      <circle cx="257" cy="415" r="7" fill="#fff" stroke="#444" strokeWidth="3" />
      <path d="M257 408v-18h18" stroke="#444" strokeWidth="3" fill="none" />
      <path d="M202 147v9M209 147v9" stroke="#3c55c8" strokeWidth="3" />

      {/* place names */}
      <g fontFamily="'Noto Sans CJK JP', sans-serif">
        <text x="715 774 832" y="269" fontSize="46" fontWeight="500" fill="#0f7044">柏ＩＣ</text>
        {labels.map(([t, x, y, pitch, size]) => (
          <text key={t + x} x={Array.from(t, (_, i) => x + i * pitch).join(" ")} y={y + size * 0.37} fontSize={size} fontWeight="500" fill="#111">
            {t}
          </text>
        ))}
        {vertical.map(([t, x, y, pitch, size]) => (
          <g key={t + x} fontSize={size} fill="#111" fontWeight="500" textAnchor="middle">
            {Array.from(t, (c, i) => (
              <text key={i} x={x} y={y + i * pitch + size * 0.37}>
                {c}
              </text>
            ))}
          </g>
        ))}
        {redLabels.map(([t, x, y]) => (
          <text key={t + x + y} x={x} y={y + 8} fontSize="22" fontWeight="700" fill="#ee1c2a" stroke="#fff" strokeWidth="2" paintOrder="stroke">
            {t}
          </text>
        ))}
        {spots.map(([t, x, y]) => (
          <text key={t + x} x={x} y={y + 10} fontSize="28" fill="#444" letterSpacing="5">
            {t}
          </text>
        ))}
      </g>
      <text x="1228" y="2086" fontSize="43" fontWeight="700" textAnchor="middle" fontFamily="Roboto, sans-serif">
        16
      </text>
      <path d="M692 1210V1303M646 1254H740" stroke="#e02a2a" strokeWidth="6" />
    </svg>
  );
}

function RoundButton({ at, tint, children }: { at: string; tint?: string; children: React.ReactNode }) {
  return (
    <button
      className={
        "absolute size-[71px] overflow-hidden rounded-full border border-white " + (tint ?? "bg-[#5d9d76]") + " " + at
      }
    >
      <svg viewBox="-104 -104 208 208" className="h-full w-full" fill="#fff">
        {children}
      </svg>
    </button>
  );
}

function MapPanel() {
  return (
    <section className="ml-[13px] flex h-[848px] w-[454px] flex-col">
      <StatusBar time="16:30" charge="100%" wifi="#fff" level={14} height="h-[30px]" small>
        <svg viewBox="0 0 18 15" className="-ml-0.5 h-[15px] w-[18px]" fill="none">
          <rect width="18" height="15" rx="1.500" fill="#fff" />
          <path d="M3.500 13V4L9 9l5.500-5v9" stroke="#388757" strokeWidth="2.200" />
        </svg>
        <svg viewBox="0 0 17 17" className="ml-1 size-[17px]">
          <path d="M1 1L16.500 8 2.500 16 4.500 9z" fill="#fff" stroke="#fff" />
          <path d="M3.500 3l5 5L16.500 0" fill="none" stroke="#388757" strokeWidth="4.500" />
          <path d="M5 3.500l3.500 3.500L14.500 1" fill="none" stroke="#fff" strokeWidth="2" />
          <path d="M1 1l4 2-1 5z" fill="#fff" />
        </svg>
      </StatusBar>
      <div className="relative h-[777px] overflow-hidden">
        <MapCanvas />
        <button className="absolute top-[21px] left-[363.500px] flex size-[70px] items-center justify-center rounded-full bg-[#ff9933] shadow-[0_3px_8px_rgba(0,0,0,0.3)]">
          <svg viewBox="0 0 24 17" className="h-[17px] w-6" stroke="#fff" strokeWidth="2.500">
            <path d="M.5 2h23M.5 8.500h23M.5 15h23" />
          </svg>
        </button>
        <RoundButton at="left-[8px] top-[427px]">
          <path d="M-67-57H68V-40H-67zM-67-25H68V-8H-67zM-67 8H68V25H-67zM-67 40H68V57H-67z" />
        </RoundButton>
        <RoundButton at="left-[8px] top-[516px]">
          <path d="M1-58L18-15 61-14 27 14 39 56 1 32-37 56-25 14-60-14-16-15z" stroke="#fff" strokeWidth="6" strokeLinejoin="round" />
        </RoundButton>
        <RoundButton at="left-[8px] top-[604px]">
          <text x="-22" y="22" fontSize="132" textAnchor="middle" fontFamily="'Open Sans', sans-serif">?</text>
          <path d="M62-62L32 28M-54 72L32 30M18 22L42 42M36 14L22 46M26 22L44 26" stroke="#fff" strokeWidth="8" strokeLinecap="round" />
        </RoundButton>
        <RoundButton at="left-[8px] top-[692px]">
          <path d="M-58 64C-22 60-12 52 2 12 14-36 22-56 62-62" fill="none" stroke="#fff" strokeWidth="10" />
          <path d="M-66 56l10 2 8-6 4 8-2 8-10 0-4 6-8-6zM52-70l8 4 6-6 4 8-4 4 2 8-8 0-8 4-4-8z" />
        </RoundButton>
        <RoundButton at="left-[112.500px] top-[692px]">
          <path d="M-63-38H50q6 0 6 6V-16h12V18H56V34q0 6-6 6H-63q-6 0-6-6V-32q0-6 6-6z" />
          <text x="-9" y="29" fontSize="51" fontWeight="700" fill="#7b7b7b" textAnchor="middle" fontFamily="Roboto, sans-serif">100</text>
        </RoundButton>
        <RoundButton at="left-[194.500px] top-[692px]" tint="bg-[#ffd08f]">
          <path d="M-52-21V-44q0-8 8-8H-21M21-52H44q8 0 8 8V-21M52 21V44q0 8-8 8H21M-21 52H-44q-8 0-8-8V21" fill="none" stroke="#fff" strokeWidth="12" />
          <circle r="18" />
        </RoundButton>
        <RoundButton at="left-[276px] top-[692px]">
          <path
            transform="scale(6.500) translate(-12 -12)"
            d="M3 17.250V21h3.750L17.810 9.940l-3.750-3.750zM20.710 7.040a1 1 0 0 0 0-1.410l-2.340-2.340a1 1 0 0 0-1.410 0l-1.830 1.830 3.750 3.750z"
          />
        </RoundButton>
        <RoundButton at="left-[369px] top-[562px]">
          <path d="M-12-62H12V-12H62V12H12V62H-12V12H-62V-12H-12z" />
        </RoundButton>
        <RoundButton at="left-[369px] top-[692px]">
          <rect x="-62" y="-14" width="124" height="28" rx="2" />
        </RoundButton>
      </div>
    </section>
  );
}

export default function App() {
  return (
    <main className="relative flex h-[848px] w-[1448px] overflow-hidden bg-white font-[Roboto,'Noto_Sans_CJK_JP',sans-serif]">
      <SourcesPanel />
      <DashboardPanel />
      <MapPanel />
      <svg viewBox="0 0 1448 848" className="pointer-events-none absolute inset-0 h-full w-full" fill="none">
        <g stroke="#f00" strokeWidth="6">
          <rect x="52" y="394" width="424" height="67" />
          <rect x="754" y="369" width="196" height="210" />
          <path d="M497 394.500L716 427.800M962 420.500L982 411" />
        </g>
        <path d="M731.500 430.500L715 419 712 437zM994 404L974 404.500 983 420z" fill="#f00" />
      </svg>
    </main>
  );
}
